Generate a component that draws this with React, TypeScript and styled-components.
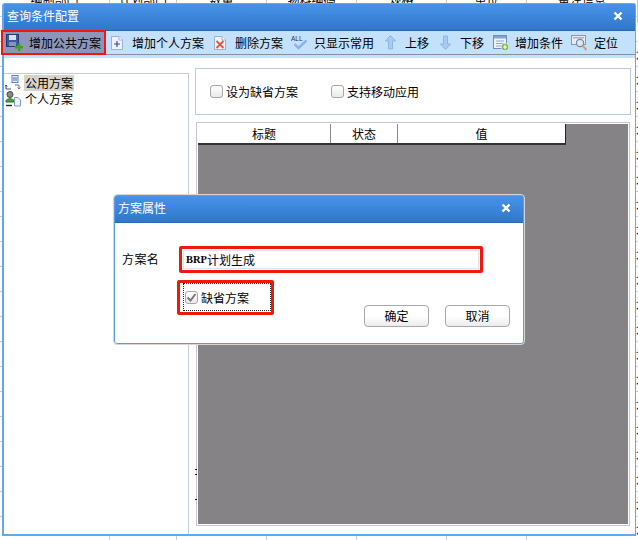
import React from 'react';
import styled, { createGlobalStyle } from 'styled-components';

const GlobalStyle = createGlobalStyle`
  html, body {
    margin: 0;
    padding: 0;
    background: #fff;
  }
  * {
    box-sizing: border-box;
  }
`;

const Page = styled.div`
  position: relative;
  width: 638px;
  height: 540px;
  overflow: hidden;
  background: #fff;
  color: #000;
  font: 12px/16px "Noto Sans CJK SC", "Liberation Sans", sans-serif;
`;

// table of the page behind the window, only its edges show
const Backdrop = styled.div`
  position: absolute;
  left: 0;
  top: -8px;
  width: 638px;
`;

const BackRow = styled.div`
  display: grid;
  grid-template-columns: 110px 67px 90px 90px 90px 80px 111px;
  height: 25px;
  border-bottom: 1px solid #c3cbdc;
`;

const BackCell = styled.div<{ $edge?: boolean; $head?: boolean }>`
  display: flex;
  align-items: center;
  justify-content: ${props => (props.$edge ? 'flex-end' : 'center')};
  margin-right: ${props => (props.$edge ? '-10px' : '0')};
  padding-bottom: ${props => (props.$head ? '15px' : '0')};
  border-right: ${props => (props.$edge ? 'none' : '1px solid #c3cbdc')};
  white-space: nowrap;
`;

const Window = styled.div`
  position: absolute;
  left: 2px;
  top: 3px;
  width: 634px;
  height: 533px;
  display: flex;
  flex-direction: column;
  background: #fff;
  border: 1px solid #62a8f0;
  border-left-width: 2px;
  border-bottom-width: 2px;
  border-radius: 3px 3px 0 0;
`;

const TitleBar = styled.div`
  flex: none;
  height: 27px;
  display: flex;
  align-items: center;
  justify-content: space-between;
  padding: 0 12px 2px 3px;
  color: #fff;
  background: linear-gradient(#4793ea, #3177c9);
  border-bottom: 1px solid #2a68b4;
`;

const CloseIcon = () => (
  <svg width="10" height="10" viewBox="0 0 10 10">
    <path d="M1.5 1.5 L8.5 8.5 M8.5 1.5 L1.5 8.5" stroke="#fff" strokeWidth="2.4" />
  </svg>
);

const Toolbar = styled.div`
  flex: none;
  height: 24px;
  display: flex;
  align-items: center;
  background: #c4e1fc;
  border-bottom: 1px solid #8b8f99;
  box-shadow: 0 3px 0 #c4e1fc;
`;

const ToolItem = styled.div<{ $left: number; $gap: number }>`
  display: flex;
  align-items: center;
  margin-left: ${props => props.$left}px;
  gap: ${props => props.$gap}px;
  white-space: nowrap;
`;

const ActiveTool = styled(ToolItem)`
  position: relative;
  height: 25px;
  width: 105px;
  padding-left: 3px;
  background: #8d96b8;
  border: 2px solid #f0180c;
`;

const Main = styled.div`
  flex: 1;
  display: flex;
  margin-top: 3px;
  position: relative;
`;

const TreePanel = styled.div`
  flex: none;
  width: 185px;
  margin-top: 15px;
  padding: 1px 0 0 1px;
  border-top: 1px solid #c3cbdc;
  border-right: 1px solid #c3cbdc;
`;

const TreeRow = styled.div`
  display: flex;
  align-items: center;
  height: 16px;
  gap: 3px;
`;

const TreeLabel = styled.span<{ $selected?: boolean }>`
  padding: 0 1px;
  background: ${props => (props.$selected ? '#d6d3cc' : 'transparent')};
`;

const RightPanel = styled.div`
  flex: 1;
  display: flex;
  flex-direction: column;
  margin: 10px 4px 8px 6px;
  gap: 7px;
`;

const OptionBox = styled.div`
  flex: none;
  height: 47px;
  display: flex;
  align-items: center;
  padding-left: 14px;
  gap: 33px;
  border: 1px solid #bccadd;
`;

const CheckLabel = styled.label`
  display: flex;
  align-items: center;
  gap: 3px;
`;

const CheckBox = styled.span`
  flex: none;
  width: 13px;
  height: 13px;
  display: flex;
  align-items: center;
  justify-content: center;
  background: linear-gradient(#fff, #e9e9e9);
  border: 1px solid #a6a6a6;
  border-radius: 3px;
`;

const GridBox = styled.div`
  flex: 1;
  margin-left: 1px;
  margin-right: 1px;
  padding: 1px;
  background: #fff;
  border: 1px solid #c6c6d2;
  display: flex;
`;

const GridArea = styled.div`
  flex: 1;
  background: #858385;
`;

const GridHeader = styled.div`
  display: grid;
  grid-template-columns: 133px 67px 167px;
  width: 368px;
  height: 21px;
  background: #fff;
  border-right: 1px solid #222;
  border-bottom: 2px solid #333;
`;

const HeaderCell = styled.div`
  display: flex;
  align-items: center;
  justify-content: center;
  border-right: 1px solid #8a8a8a;
  &:last-child {
    border-right: none;
  }
`;

const Speck = styled.i<{ $top: number }>`
  position: absolute;
  left: 191px;
  top: ${props => props.$top}px;
  width: 2px;
  height: 1px;
  background: #111;
`;

const Dialog = styled.div`
  position: absolute;
  left: 114px;
  top: 195px;
  width: 410px;
  height: 149px;
  display: flex;
  flex-direction: column;
  background: #fff;
  border: 1px solid #5a9be6;
  border-radius: 3px;
  outline: 1px solid #d6d6d6;
`;

const DialogBody = styled.div`
  flex: 1;
  position: relative;
  display: flex;
  flex-direction: column;
  padding: 23px 0 0 64px;
`;

const NameLabel = styled.span`
  position: absolute;
  left: 7px;
  top: 28px;
  letter-spacing: 0.4px;
`;

const RedFrame = styled.div`
  width: 304px;
  height: 27px;
  padding: 1px;
  border: 3px solid #f0180c;
  border-radius: 2px;
`;

const NameInput = styled.div`
  height: 100%;
  display: flex;
  align-items: center;
  padding-left: 3px;
  background: #fff;
  box-shadow: inset 0 0 0 1px #e2e2ea;
  font-family: "Liberation Serif", "Noto Sans CJK SC", serif;
  font-weight: 700;
  font-size: 10.5px;
`;

const NameChinese = styled.span`
  font-family: "Noto Sans CJK SC", sans-serif;
  font-weight: 400;
  font-size: 12px;
`;

const DefaultFrame = styled.div`
  width: 97px;
  height: 35px;
  margin: 7px 0 0 -2px;
  padding: 0 0 1px 3px;
  display: flex;
  align-items: stretch;
  border: 3px solid #f0180c;
  border-radius: 2px;
`;

const DottedFocus = styled(CheckLabel)`
  flex: 1;
  padding: 1px 0 0 1px;
  border: 1px dotted #222;
`;

const DialogButtons = styled.div`
  position: absolute;
  right: 13px;
  bottom: 16px;
  display: flex;
  gap: 16px;
`;

const Button = styled.div`
  width: 65px;
  height: 22px;
  display: flex;
  align-items: center;
  justify-content: center;
  background: linear-gradient(#fff 50%, #ececec);
  border: 1px solid #a9a9a9;
  border-radius: 4px;
`;

const SaveIcon = () => (
  <svg width="17" height="17" viewBox="0 0 17 17">
    <rect x="0.5" y="0.5" width="12" height="12" fill="#3d5a9c" stroke="#26386e" />
    <rect x="3" y="1" width="7" height="5" fill="#d7e0f2" />
    <rect x="3" y="8" width="7" height="4" fill="#8694b8" />
    <path d="M9 12 H12 V9.5 H14.5 V12 H17 V14.5 H14.5 V17 H12 V14.5 H9 Z" fill="#3fa028" />
  </svg>
);

const PageIcon = ({ children }: { children: React.ReactNode }) => (
  <svg width="12" height="14" viewBox="0 0 12 14">
    <path d="M0.5 0.5 H8 L11.5 4 V13.5 H0.5 Z" fill="#eef2fb" stroke="#9fb0d2" />
    <path d="M8 0.5 V4 H11.5" fill="#fff" stroke="#9fb0d2" />
    {children}
  </svg>
);

const AllIcon = () => (
  <svg width="17" height="15" viewBox="0 0 17 15">
    <text x="0" y="5.5" fontFamily="Liberation Sans" fontSize="6.5" fill="#333">ALL</text>
    <path d="M3.5 9 L7.5 13 L15.5 5.5" fill="none" stroke="#8fb1e6" strokeWidth="2.4" />
  </svg>
);

const ArrowIcon = ({ down }: { down?: boolean }) => (
  <svg width="11" height="15" viewBox="0 0 11 15">
    <path
      d={down ? 'M3.5 1 H7.5 V9 H10.5 L5.5 14.5 L0.5 9 H3.5 Z' : 'M5.5 0.5 L10.5 6 H7.5 V14 H3.5 V6 H0.5 Z'}
      fill="#a9cbf2"
      stroke="#8db4e4"
    />
  </svg>
);

const ListAddIcon = () => (
  <svg width="16" height="16" viewBox="0 0 16 16">
    <rect x="0.5" y="0.5" width="13" height="13" fill="#eef3fb" stroke="#6f8fb8" />
    <rect x="1" y="1" width="12" height="2.5" fill="#7fa4d4" />
    <path d="M3 6 H11 M3 8.5 H11 M3 11 H9" stroke="#8ea6c6" />
    <circle cx="12" cy="12" r="3.8" fill="#74b84a" stroke="#fff" strokeWidth="0.6" />
    <path d="M12 9.8 V14.2 M9.8 12 H14.2" stroke="#fff" strokeWidth="1.2" />
  </svg>
);

const LocateIcon = () => (
  <svg width="17" height="16" viewBox="0 0 17 16">
    <rect x="0.5" y="0.5" width="14" height="9" fill="#e8edf5" stroke="#8d96a6" />
    <rect x="2" y="2" width="11" height="1.5" fill="#a7b1c2" />
    <circle cx="9" cy="8" r="3.6" fill="#dbe7f5" stroke="#7c8798" strokeWidth="1.2" />
    <path d="M11.5 10.5 L15.5 15" stroke="#d2a15c" strokeWidth="2" />
  </svg>
);

const PublicIcon = () => (
  <svg width="16" height="16" viewBox="0 0 16 16">
    <rect x="7" y="0.5" width="6" height="7" fill="#eef3fb" stroke="#5b7fc0" />
    <path d="M8 3 H12 M8 5 H12" stroke="#3f67b5" />
    <path d="M1 14 V10 M1 10 L0 11.5 M1 10 L2.5 11.5 M6 14 H1" fill="none" stroke="#3b4f7a" />
    <path d="M10 10 L14 10 V14 M14 14 L12.5 12.5 M14 14 L15.5 12.5" fill="none" stroke="#4f76c4" />
  </svg>
);

const PersonalIcon = () => (
  <svg width="16" height="16" viewBox="0 0 16 16">
    <circle cx="5" cy="3.5" r="3" fill="#8a8a8a" stroke="#444" />
    <path d="M1 10 C1 7 9 7 9 10 V11 H1 Z" fill="#4ea13f" stroke="#2f6d28" />
    <path d="M9.5 6.5 H13 L15.5 9 V15 H9.5 Z" fill="#eef3fb" stroke="#7f9ccb" />
    <path d="M1 14.5 H7" stroke="#223" strokeWidth="1.4" />
  </svg>
);

const backRows = Array.from({ length: 23 }, (_, i) => i);
const backTitles = ['编制部门', '计划部门', '数量', '物料编码', '规格', '单位'];

const App: React.FC = () => {
  return (
    <Page>
      <GlobalStyle />
      <Backdrop>
        {backRows.map(i => (
          <BackRow key={i}>
            {backTitles.map(title => (
              <BackCell key={title} $head={i === 0}>{i === 0 ? title : ''}</BackCell>
            ))}
            <BackCell $edge={i > 0} $head={i === 0}>{i === 0 ? '备注信息' : i > 1 ? '计划' : ''}</BackCell>
          </BackRow>
        ))}
      </Backdrop>

      <Window>
        <TitleBar>
          <span>查询条件配置</span>
          <CloseIcon />
        </TitleBar>
        <Toolbar>
          <ActiveTool $left={-3} $gap={6}>
            <SaveIcon />
            增加公共方案
          </ActiveTool>
          <ToolItem $left={5} $gap={9}>
            <PageIcon>
              <path d="M6 5 V11 M3 8 H9" stroke="#3b46b0" strokeWidth="1.2" />
            </PageIcon>
            增加个人方案
          </ToolItem>
          <ToolItem $left={10} $gap={9}>
            <PageIcon>
              <path d="M2.5 5 L9.5 12 M9.5 5 L2.5 12" stroke="#e2563f" strokeWidth="1.8" />
            </PageIcon>
            删除方案
          </ToolItem>
          <ToolItem $left={8} $gap={6}>
            <AllIcon />
            只显示常用
          </ToolItem>
          <ToolItem $left={11} $gap={9}>
            <ArrowIcon />
            上移
          </ToolItem>
          <ToolItem $left={11} $gap={9}>
            <ArrowIcon down />
            下移
          </ToolItem>
          <ToolItem $left={9} $gap={6}>
            <ListAddIcon />
            增加条件
          </ToolItem>
          <ToolItem $left={8} $gap={6}>
            <LocateIcon />
            定位
          </ToolItem>
        </Toolbar>
        <Main>
          <TreePanel>
            <TreeRow>
              <PublicIcon />
              <TreeLabel $selected>公用方案</TreeLabel>
            </TreeRow>
            <TreeRow>
              <PersonalIcon />
              <TreeLabel>个人方案</TreeLabel>
            </TreeRow>
          </TreePanel>
          <RightPanel>
            <OptionBox>
              <CheckLabel>
                <CheckBox />
                设为缺省方案
              </CheckLabel>
              <CheckLabel>
                <CheckBox />
                支持移动应用
              </CheckLabel>
            </OptionBox>
            <GridBox>
              <GridArea>
                <GridHeader>
                  <HeaderCell>标题</HeaderCell>
                  <HeaderCell>状态</HeaderCell>
                  <HeaderCell>值</HeaderCell>
                </GridHeader>
              </GridArea>
            </GridBox>
          </RightPanel>
          <Speck $top={411} />
          <Speck $top={416} />
          <Speck $top={441} />
        </Main>
      </Window>

      <Dialog>
        <TitleBar>
          <span>方案属性</span>
          <CloseIcon />
        </TitleBar>
        <DialogBody>
          <NameLabel>方案名</NameLabel>
          <RedFrame>
            <NameInput>
              BRP<NameChinese>计划生成</NameChinese>
            </NameInput>
          </RedFrame>
          <DefaultFrame>
            <DottedFocus>
              <CheckBox>
                <svg width="11" height="11" viewBox="0 0 11 11">
                  <path d="M1.5 5.5 L4.5 8.5 L9.5 2" fill="none" stroke="#777" strokeWidth="2" />
                </svg>
              </CheckBox>
              缺省方案
            </DottedFocus>
          </DefaultFrame>
          <DialogButtons>
            <Button>确定</Button>
            <Button>取消</Button>
          </DialogButtons>
        </DialogBody>
      </Dialog>
    </Page>
  );
};

export default App;
